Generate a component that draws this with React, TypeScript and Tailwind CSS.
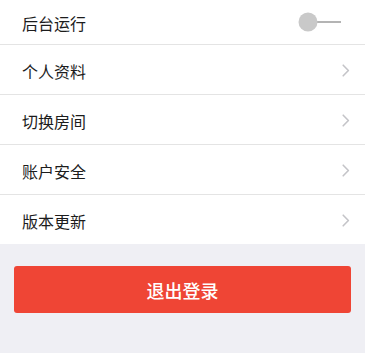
import React from "react";

const font = { fontFamily: '"Noto Sans CJK SC", "Noto Sans", sans-serif' };

function Chevron() {
  return (
    <svg width="8" height="13" viewBox="0 0 8 13" className="block">
      <path d="M1.2 1.2 L6.4 6.5 L1.2 11.8" fill="none" stroke="#c4c4c8" strokeWidth="1.6" strokeLinecap="round" strokeLinejoin="round" />
    </svg>
  );
}

function Toggle() {
  return (
    <svg width="44" height="20" viewBox="0 0 44 20" className="block">
      <line x1="16" y1="10" x2="43" y2="10" stroke="#b4b4b4" strokeWidth="2" />
      <circle cx="10" cy="10" r="9.5" fill="#c9c9c9" />
    </svg>
  );
}

function Row({ label, first }: { label: string; first?: boolean }) {
  return (
    <div
      className={`flex items-center justify-between pl-[22px] pr-[15px] border-b border-[#e4e4e4] ${first ? "h-[45px] pt-[1px]" : "h-[50px] pt-[2px]"}`}
    >
      <span className="text-[16px] text-[#1c1c1c] leading-none">{label}</span>
      {first ? (
        <div className="mr-[8px] -mt-[2px]">
          <Toggle />
        </div>
      ) : (
        <Chevron />
      )}
    </div>
  );
}

export default function App() {
  return (
    <div className="w-[365px] h-[353px] bg-[#efeff4] overflow-hidden" style={font}>
      <div className="bg-white">
        <Row label="后台运行" first />
        <Row label="个人资料" />
        <Row label="切换房间" />
        <Row label="账户安全" />
        <div className="flex items-center justify-between pl-[22px] pr-[15px] h-[49px] pt-[2px]">
          <span className="text-[16px] text-[#1c1c1c] leading-none">版本更新</span>
          <Chevron />
        </div>
      </div>
      <div className="px-[14px] pt-[22px]">
        <button className="w-full h-[47px] rounded-[3px] bg-[#ef4535] text-white text-[18px] font-medium flex items-center justify-center pt-[1px]">
          退出登录
        </button>
      </div>
    </div>
  );
}
